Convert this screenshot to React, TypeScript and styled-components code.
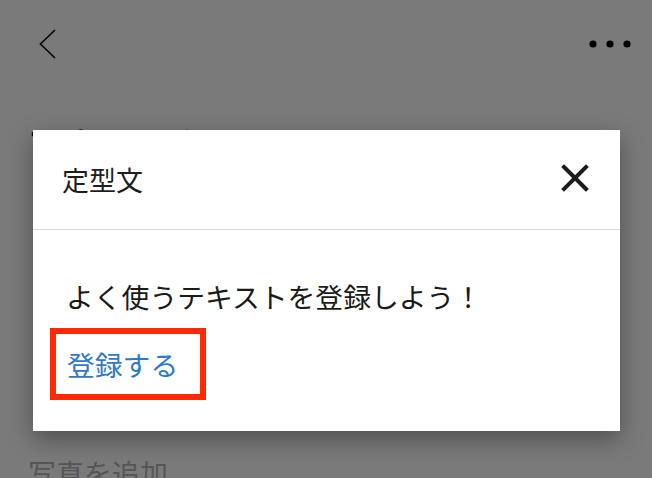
import React from "react";
import styled, { createGlobalStyle } from "styled-components";

const Global = createGlobalStyle`
  html, body { margin: 0; padding: 0; background: #fff; }
  body {
    font-family: "Noto Sans CJK JP", "Noto Sans", sans-serif;
    width: 652px; height: 478px; overflow: hidden;
  }
`;

const Page = styled.div`
  position: relative;
  width: 652px;
  height: 478px;
  overflow: hidden;
  display: flex;
  flex-direction: column;
  & > * { flex-shrink: 0; }
`;

const TopBar = styled.div`
  height: 88px;
  display: flex;
  align-items: center;
  justify-content: space-between;
  padding: 0 21px 0 39px;
`;

const Heading = styled.h1`
  margin: 33px 0 0 30px;
  font-size: 34px;
  line-height: 48px;
  font-weight: 700;
  color: #111;
`;

const AddPhoto = styled.div`
  margin: 284px 0 0 28px;
  font-size: 28px;
  line-height: 40px;
  color: #b4b4b6;
`;

const Overlay = styled.div`
  position: absolute;
  inset: 0;
  background: rgba(0, 0, 0, 0.52);
  padding: 130px 0 0 33px;
`;

const Dialog = styled.div`
  width: 587px;
  height: 301px;
  background: #fff;
  box-shadow: 0 8px 22px rgba(0, 0, 0, 0.35);
  display: flex;
  flex-direction: column;
`;

const DialogHeader = styled.div`
  height: 99px;
  display: flex;
  align-items: center;
  justify-content: space-between;
  padding: 0 31px 0 29px;
  border-bottom: 1px solid #dcdcdc;
`;

const Title = styled.div`
  font-size: 27px;
  line-height: 40px;
  color: #1e1e1e;
`;

const CloseButton = styled.button`
  border: none;
  background: none;
  padding: 0;
  width: 28px;
  height: 28px;
  display: flex;
  align-items: center;
  justify-content: center;
  margin-top: -4px;
`;

const DialogBody = styled.div`
  padding: 46px 0 0 17px;
  display: flex;
  flex-direction: column;
  align-items: flex-start;
`;

const Message = styled.div`
  font-size: 27.8px;
  line-height: 40px;
  color: #1a1a1a;
  padding-left: 16px;
`;

const Highlight = styled.div`
  margin-top: 12px;
  border: 6px solid #ff2a06;
  padding: 10px 22px 10px 11px;
`;

const RegisterLink = styled.a`
  display: block;
  font-size: 27.8px;
  line-height: 40px;
  color: #2f7ac9;
  text-decoration: none;
`;

export default function App() {
  return (
    <>
      <Global />
      <Page>
        <TopBar>
          <svg width="18" height="30" viewBox="0 0 18 30">
            <path d="M16 1 L1.5 15 L16 29" fill="none" stroke="#111" strokeWidth="1.7" />
          </svg>
          <svg width="42" height="10" viewBox="0 0 42 10">
            <circle cx="4" cy="5" r="3.6" fill="#000" />
            <circle cx="21" cy="5" r="3.6" fill="#000" />
            <circle cx="38" cy="5" r="3.6" fill="#000" />
          </svg>
        </TopBar>
        <Heading>下書き一覧</Heading>
        <AddPhoto>写真を追加</AddPhoto>
        <Overlay>
          <Dialog>
            <DialogHeader>
              <Title>定型文</Title>
              <CloseButton aria-label="閉じる">
                <svg width="28" height="28" viewBox="0 0 28 28">
                  <path d="M3 3 L25 25 M25 3 L3 25" stroke="#1c1c1c" strokeWidth="4" strokeLinecap="square" />
                </svg>
              </CloseButton>
            </DialogHeader>
            <DialogBody>
              <Message>よく使うテキストを登録しよう！</Message>
              <Highlight>
                <RegisterLink href="#">登録する</RegisterLink>
              </Highlight>
            </DialogBody>
          </Dialog>
        </Overlay>
      </Page>
    </>
  );
}
